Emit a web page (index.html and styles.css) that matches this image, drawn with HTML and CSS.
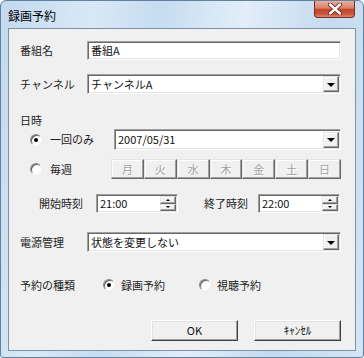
FILE: index.html
```html
<!DOCTYPE html>
<html lang="ja">
<head>
    <meta charset="UTF-8">
    <title>録画予約</title>
    <link rel="stylesheet" href="styles.css">
</head>
<body>
<div class="window">
    <div class="titlebar">
        <span class="title">録画予約</span>
        <div class="close">
            <svg width="16" height="12" viewBox="0 0 16 12">
                <path d="M3 1.5 L13 10.5 M13 1.5 L3 10.5" stroke="#6b2416" stroke-width="4.2" stroke-linecap="round"/>
                <path d="M3 1.5 L13 10.5 M13 1.5 L3 10.5" stroke="#ffffff" stroke-width="2.4" stroke-linecap="round"/>
            </svg>
        </div>
    </div>

    <div class="client">
        <div class="row row-name">
            <span class="lbl">番組名</span>
            <div class="field text wide">番組A</div>
        </div>

        <div class="row row-channel">
            <span class="lbl">チャンネル</span>
            <div class="field combo wide"><span>チャンネルA</span><span class="drop raised"></span></div>
        </div>

        <div class="section">日時</div>

        <div class="row row-once">
            <span class="radio on"></span>
            <span class="opt">一回のみ</span>
            <div class="field combo date"><span>2007/05/31</span><span class="drop raised"></span></div>
        </div>

        <div class="row row-week">
            <span class="radio"></span>
            <span class="opt">毎週</span>
            <div class="days">
                <span class="day raised">月</span>
                <span class="day raised">火</span>
                <span class="day raised">水</span>
                <span class="day raised">木</span>
                <span class="day raised">金</span>
                <span class="day raised">土</span>
                <span class="day raised">日</span>
            </div>
        </div>

        <div class="row row-time">
            <span class="tlbl start">開始時刻</span>
            <div class="field spin"><span>21:00</span><span class="spinbtns"><span class="up raised"></span><span class="down raised"></span></span></div>
            <span class="tlbl end">終了時刻</span>
            <div class="field spin"><span>22:00</span><span class="spinbtns"><span class="up raised"></span><span class="down raised"></span></span></div>
        </div>

        <div class="row row-power">
            <span class="lbl">電源管理</span>
            <div class="field combo wide"><span>状態を変更しない</span><span class="drop raised"></span></div>
        </div>

        <div class="row row-kind">
            <span class="klbl">予約の種類</span>
            <span class="radio on"></span>
            <span class="opt">録画予約</span>
            <span class="radio second"></span>
            <span class="opt">視聴予約</span>
        </div>

        <div class="buttons">
            <span class="btn">OK</span>
            <span class="btn">ｷｬﾝｾﾙ</span>
        </div>
    </div>
</div>
</body>
</html>
```

FILE: styles.css
```css
body {
    margin: 0;
    background: #ffffff;
    font-family: "Noto Sans CJK JP", "Liberation Sans", sans-serif;
    font-size: 11px;
    color: #1e1e1e;
}

.window {
    width: 364px;
    height: 358px;
    box-sizing: border-box;
    border: 1px solid #62819f;
    border-radius: 6px 6px 3px 3px;
    background: linear-gradient(100deg, #c2d9ef 0%, #d9e8f6 22%, #c6dcf0 38%, #e2eef9 58%, #c4daef 78%, #d3e5f5 100%);
    display: flex;
    flex-direction: column;
    overflow: hidden;
}

.titlebar {
    height: 27px;
    flex-shrink: 0;
    display: flex;
    justify-content: space-between;
    align-items: flex-start;
}

.title {
    font-size: 12px;
    line-height: 15px;
    margin: 7px 0 0 7px;
    color: #000;
}

.close {
    width: 41px;
    height: 17px;
    margin-right: 8px;
    box-sizing: border-box;
    border: 1px solid #7a2d1e;
    border-top: none;
    border-radius: 0 0 4px 4px;
    background: linear-gradient(#e9ad9e 0%, #d98068 45%, #c2452b 52%, #c9523a 80%, #e08a6a 100%);
    display: flex;
    align-items: center;
    justify-content: center;
}

.client {
    margin: 0 7px;
    height: 323px;
    box-sizing: border-box;
    border: 1px solid #7f91a4;
    background: #f0f0f0;
    padding: 0 14px 0 11px;
}

.row {
    display: flex;
    align-items: center;
    white-space: nowrap;
}

.lbl {
    width: 67px;
    flex-shrink: 0;
    line-height: 13px;
}

.field {
    box-sizing: border-box;
    flex-shrink: 0;
    background: #fff;
    border: 1px solid;
    border-color: #a0a0a0 #ffffff #ffffff #a0a0a0;
    box-shadow: inset 1px 1px 0 #696969, inset -1px -1px 0 #e3e3e3;
    display: flex;
    align-items: center;
    padding-left: 3px;
    line-height: 13px;
    color: #111;
}

.wide {
    width: 254px;
}

.text {
    height: 19px;
}

.combo {
    height: 20px;
}

.raised {
    box-sizing: border-box;
    background: #f0f0f0;
    border: 1px solid;
    border-color: #e3e3e3 #696969 #696969 #e3e3e3;
    box-shadow: inset -1px -1px 0 #a0a0a0, inset 1px 1px 0 #ffffff;
}

.drop {
    margin-left: auto;
    margin-right: 1px;
    width: 16px;
    height: 16px;
    display: flex;
    align-items: center;
    justify-content: center;
}

.drop::after {
    content: "";
    border-top: 4px solid #000;
    border-left: 4px solid transparent;
    border-right: 4px solid transparent;
    margin-top: 1px;
}

.section {
    margin-top: 19px;
    line-height: 14px;
}

.radio {
    width: 12px;
    height: 12px;
    flex-shrink: 0;
    box-sizing: border-box;
    border-radius: 50%;
    border: 1px solid;
    border-color: #8a8a8a #f4f4f4 #f4f4f4 #8a8a8a;
    box-shadow: inset 1px 1px 0 #5a5a5a;
    background: #fff;
    display: flex;
    align-items: center;
    justify-content: center;
}

.radio.on::after {
    content: "";
    width: 4px;
    height: 4px;
    border-radius: 50%;
    background: #000;
}

.opt {
    margin-left: 8px;
    line-height: 13px;
}

.row-name {
    margin-top: 12px;
}

.row-channel {
    margin-top: 14px;
}

.row-once {
    margin-top: 2px;
    padding-left: 10px;
}

.date {
    margin-left: auto;
    width: 227px;
    height: 21px;
}

.row-week {
    margin-top: 9px;
    padding-left: 10px;
}

.days {
    margin-left: auto;
    width: 230px;
    height: 20px;
    display: flex;
}

.day {
    flex: 1;
    display: flex;
    align-items: center;
    justify-content: center;
    color: #a0a0a0;
    text-shadow: 1px 1px 0 #fff;
}

.row-time {
    margin-top: 15px;
}

.tlbl {
    flex-shrink: 0;
    box-sizing: border-box;
    line-height: 13px;
}

.tlbl.start {
    width: 76px;
    padding-left: 19px;
}

.tlbl.end {
    width: 80px;
    padding-left: 26px;
}

.spin {
    width: 82px;
    height: 19px;
}

.spinbtns {
    margin-left: auto;
    margin-right: 1px;
    width: 16px;
    height: 15px;
    display: flex;
    flex-direction: column;
}

.up,
.down {
    flex: 1;
    display: flex;
    align-items: center;
    justify-content: center;
}

.up::after {
    content: "";
    border-bottom: 2px solid #000;
    border-left: 2px solid transparent;
    border-right: 2px solid transparent;
}

.down::after {
    content: "";
    border-top: 2px solid #000;
    border-left: 2px solid transparent;
    border-right: 2px solid transparent;
}

.row-power {
    margin-top: 19px;
}

.row-kind {
    margin-top: 23px;
    height: 20px;
}

.klbl {
    width: 83px;
    flex-shrink: 0;
    line-height: 13px;
}

.opt + .radio.second {
    margin-left: 34px;
}

.row-kind .opt {
    margin-left: 6px;
}

.buttons {
    margin-top: 25px;
    display: flex;
    justify-content: flex-end;
    gap: 16px;
}

.btn {
    width: 87px;
    height: 21px;
    box-sizing: border-box;
    background: #f0f0f0;
    border: 1px solid;
    border-color: #ffffff #404040 #404040 #ffffff;
    box-shadow: inset -1px -1px 0 #a0a0a0, inset 1px 1px 0 #e3e3e3;
    display: flex;
    align-items: center;
    justify-content: center;
    line-height: 13px;
    color: #111;
}
```
